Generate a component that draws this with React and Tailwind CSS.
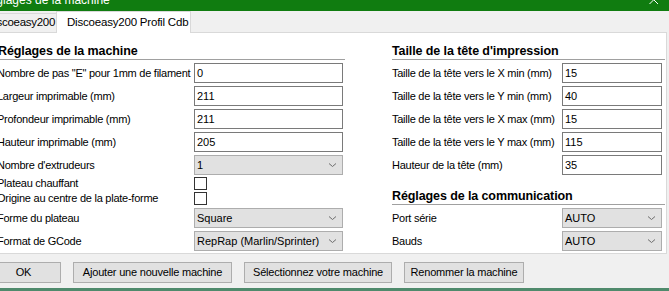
import React from "react";

const Chevron = () => (
  <svg width="9" height="6" viewBox="0 0 9 6" className="shrink-0">
    <path d="M1 1.5 L4.5 4.5 L8 1.5" fill="none" stroke="#6d6d6d" strokeWidth="1" />
  </svg>
);

const Input = ({ value, w }) => (
  <div className={`h-[20px] ${w} border border-[#7a7a7a] bg-white pl-[2px] flex items-center text-[11px] text-black shrink-0`}>
    {value}
  </div>
);

const Select = ({ value, w }) => (
  <div className={`h-[20px] ${w} border border-[#adadad] bg-[#e1e1e1] pl-[2px] pr-[5px] flex items-center justify-between text-[11px] text-black shrink-0`}>
    <span>{value}</span>
    <Chevron />
  </div>
);

const Check = () => <div className="w-[13px] h-[13px] border border-[#333333] bg-white shrink-0" />;

const Row = ({ label, children, cls = "h-[20px]" }) => (
  <div className={`flex items-center ${cls}`}>
    <span className="flex-1 min-w-0 text-[11px] tracking-[-0.25px] text-black whitespace-nowrap leading-[13px]">{label}</span>
    {children}
  </div>
);

const Header = ({ text, cls }) => (
  <div className={`flex items-end border-b border-[#a0a0a0] ${cls}`}>
    <span className="text-[12.5px] tracking-[-0.1px] font-bold leading-[16px] text-black whitespace-nowrap">{text}</span>
  </div>
);

const Button = ({ label, w }) => (
  <div className={`h-[21px] ${w} border border-[#adadad] bg-[#e1e1e1] flex items-center justify-center text-[11px] tracking-[-0.2px] text-black whitespace-nowrap`}>
    {label}
  </div>
);

export default function App() {
  return (
    <div
      className="w-[669px] h-[291px] overflow-hidden bg-[#f0f0f0] flex flex-col"
      style={{ fontFamily: '"Liberation Sans", Arial, sans-serif' }}
    >
      {/* title bar */}
      <div className="h-[11px] bg-[#107c10] flex justify-between overflow-hidden shrink-0">
        <span className="text-white text-[12px] leading-[14px] -mt-[7px] -ml-[19px] whitespace-nowrap">
          Réglages de la machine
        </span>
        <svg width="10" height="11" viewBox="0 0 10 11" className="mr-[10px] -mt-[5px]">
          <path d="M0.5 0.5 L9 9 M9 0.5 L0.5 9" stroke="white" strokeWidth="1" />
        </svg>
      </div>

      {/* tabs */}
      <div className="h-[21px] flex items-end shrink-0 relative z-10">
        <div className="h-[19px] w-[60px] -ml-[3px] border border-[#d9d9d9] border-b-0 bg-[#f0f0f0] flex items-center justify-end pr-[1px] text-[11.5px] tracking-[-0.3px] text-black whitespace-nowrap overflow-hidden">
          Discoeasy200
        </div>
        <div className="h-[22px] w-[135px] -ml-[1px] -mb-[1px] border border-[#d9d9d9] border-b-0 bg-white flex items-center pl-[10px] text-[11.5px] tracking-[-0.2px] text-black whitespace-nowrap">
          Discoeasy200 Profil Cdb
        </div>
      </div>

      {/* panel */}
      <div className="h-[222px] w-[669px] -ml-[2px] border border-[#d9d9d9] bg-white flex shrink-0">
        {/* left column */}
        <div className="w-[348px] -ml-[2px] pr-[2px] flex flex-col">
          <Header text="Réglages de la machine" cls="h-[27px] -mr-[2px] pl-[1px]" />
          <div className="flex flex-col gap-[3px] mt-[3px]">
            <Row label={'Nombre de pas "E" pour 1mm de filament'}><Input value="0" w="w-[149px]" /></Row>
            <Row label="Largeur imprimable (mm)"><Input value="211" w="w-[149px]" /></Row>
            <Row label="Profondeur imprimable (mm)"><Input value="211" w="w-[149px]" /></Row>
            <Row label="Hauteur imprimable (mm)"><Input value="205" w="w-[149px]" /></Row>
            <Row label="Nombre d'extrudeurs"><Select value="1" w="w-[149px]" /></Row>
          </div>
          <div className="flex flex-col mt-[2px] gap-[2px]">
            <Row label="Plateau chauffant" cls="h-[13px]">
              <div className="w-[149px] flex"><Check /></div>
            </Row>
            <Row label="Origine au centre de la plate-forme" cls="h-[13px]">
              <div className="w-[149px] flex"><Check /></div>
            </Row>
          </div>
          <div className="flex flex-col gap-[3px] mt-[3px]">
            <Row label="Forme du plateau"><Select value="Square" w="w-[149px]" /></Row>
            <Row label="Format de GCode"><Select value="RepRap (Marlin/Sprinter)" w="w-[149px]" /></Row>
          </div>
        </div>

        {/* right column */}
        <div className="w-[273px] ml-[47px] pr-[3px] flex flex-col">
          <Header text="Taille de la tête d'impression" cls="h-[27px] -mr-[3px]" />
          <div className="flex flex-col gap-[3px] mt-[3px]">
            <Row label="Taille de la tête vers le X min (mm)"><Input value="15" w="w-[100px]" /></Row>
            <Row label="Taille de la tête vers le Y min (mm)"><Input value="40" w="w-[100px]" /></Row>
            <Row label="Taille de la tête vers le X max (mm)"><Input value="15" w="w-[100px]" /></Row>
            <Row label="Taille de la tête vers le Y max (mm)"><Input value="115" w="w-[100px]" /></Row>
            <Row label="Hauteur de la tête (mm)"><Input value="35" w="w-[100px]" /></Row>
          </div>
          <Header text="Réglages de la communication" cls="h-[29px] mt-[1px] -mr-[3px]" />
          <div className="flex flex-col gap-[3px] mt-[3px]">
            <Row label="Port série"><Select value="AUTO" w="w-[100px]" /></Row>
            <Row label="Bauds"><Select value="AUTO" w="w-[100px]" /></Row>
          </div>
        </div>
      </div>

      {/* buttons */}
      <div className="flex gap-[12px] -ml-[14px] mt-[8px] shrink-0">
        <Button label="OK" w="w-[75px]" />
        <Button label="Ajouter une nouvelle machine" w="w-[159px]" />
        <Button label="Sélectionnez votre machine" w="w-[148px]" />
        <Button label="Renommer la machine" w="w-[120px]" />
      </div>
      <div className="flex-1" />
      <div className="h-[3px] bg-[#4f8a6c] shrink-0" />
    </div>
  );
}
